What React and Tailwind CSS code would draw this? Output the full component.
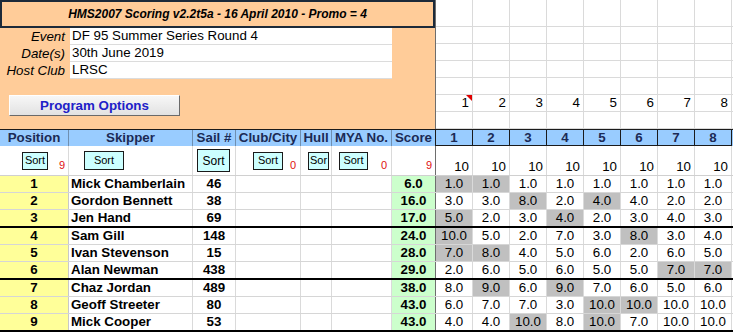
const font = "font-['Liberation_Sans',Arial,sans-serif]"

const rows = [
  { pos: 1, name: 'Mick Chamberlain', sail: 46, score: '6.0', r: ['1.0', '1.0', '1.0', '1.0', '1.0', '1.0', '1.0', '1.0'], g: [0, 1] },
  { pos: 2, name: 'Gordon Bennett', sail: 38, score: '16.0', r: ['3.0', '3.0', '8.0', '2.0', '4.0', '4.0', '2.0', '2.0'], g: [2, 4] },
  { pos: 3, name: 'Jen Hand', sail: 69, score: '17.0', r: ['5.0', '2.0', '3.0', '4.0', '2.0', '3.0', '4.0', '3.0'], g: [0, 3] },
  { pos: 4, name: 'Sam Gill', sail: 148, score: '24.0', r: ['10.0', '5.0', '2.0', '7.0', '3.0', '8.0', '3.0', '4.0'], g: [0, 5] },
  { pos: 5, name: 'Ivan Stevenson', sail: 15, score: '28.0', r: ['7.0', '8.0', '4.0', '5.0', '6.0', '2.0', '6.0', '5.0'], g: [0, 1] },
  { pos: 6, name: 'Alan Newman', sail: 438, score: '29.0', r: ['2.0', '6.0', '5.0', '6.0', '5.0', '5.0', '7.0', '7.0'], g: [6, 7] },
  { pos: 7, name: 'Chaz Jordan', sail: 489, score: '38.0', r: ['8.0', '9.0', '6.0', '9.0', '7.0', '6.0', '5.0', '6.0'], g: [1, 3] },
  { pos: 8, name: 'Geoff Streeter', sail: 80, score: '43.0', r: ['6.0', '7.0', '7.0', '3.0', '10.0', '10.0', '10.0', '10.0'], g: [4, 5] },
  { pos: 9, name: 'Mick Cooper', sail: 53, score: '43.0', r: ['4.0', '4.0', '10.0', '8.0', '10.0', '7.0', '10.0', '10.0'], g: [2, 4] },
]

const races = [1, 2, 3, 4, 5, 6, 7, 8]

function SortBtn({ label = 'Sort', className }) {
  return (
    <div className={`bg-[#ccffff] border border-[#1a1a1a] flex items-center justify-center text-[11px] leading-none ${className}`}>
      {label}
    </div>
  )
}

export default function App() {
  return (
    <div className={`${font} w-[733px] h-[335px] overflow-hidden bg-white text-black text-[13.33px]`}>
      {/* top area */}
      <div className="flex h-[129px]">
        <div className="w-[436px] shrink-0 bg-[#ffcc99] border-r border-[#6e6e6e] flex flex-col">
          <div className="h-[28px] border-2 border-[#1c2a3a] flex items-center justify-center font-bold italic text-[12px]">
            HMS2007 Scoring v2.2t5a - 16 April 2010 - Promo = 4
          </div>
          {[
            ['Event', 'DF 95 Summer Series Round 4'],
            ['Date(s)', '30th June 2019'],
            ['Host Club', 'LRSC'],
          ].map(([k, v]) => (
            <div key={k} className="flex h-[17px]">
              <div className="w-[70px] pr-[5px] text-right italic leading-[17px] whitespace-nowrap">{k}</div>
              <div className="w-[322px] bg-white border-b border-[#dcdcdc] pl-[2px] leading-[16px]">{v}</div>
            </div>
          ))}
          <div className="mt-[16px] ml-[9px] w-[171px] h-[21px] bg-gradient-to-b from-[#f7f7f7] to-[#e2e2e2] border border-t-white border-l-white border-r-[#6a6a6a] border-b-[#6a6a6a] flex items-center justify-center font-bold text-[#2020c8]">
            Program Options
          </div>
        </div>
        <div className="flex-1 flex flex-col">
          {[27, 17, 17, 17, 17, 17, 17].map((h, i) => (
            <div key={i} className={`flex border-b border-[#dadada] ${i === 0 ? 'h-[27px]' : 'h-[17px]'}`}>
              {races.map((n) => (
                <div key={n} className="relative w-[37px] shrink-0 border-r border-[#dadada] text-right pr-[3px] leading-[16px]">
                  {i === 5 ? n : ''}
                  {i === 5 && n === 1 && (
                    <span className="absolute top-0 right-0 w-0 h-0 border-t-[6px] border-t-[#e00000] border-l-[6px] border-l-transparent" />
                  )}
                </div>
              ))}
            </div>
          ))}
        </div>
      </div>

      {/* header row */}
      <div className="flex h-[17px] bg-[#99ccff] border-t border-[#1b1b1b] font-bold text-[#1b2a55] leading-[16px]">
        <div className="w-[69px] shrink-0 border-r border-[#6f8fb0] text-center">Position</div>
        <div className="w-[124px] shrink-0 border-r border-[#6f8fb0] text-center">Skipper</div>
        <div className="w-[43px] shrink-0 border-r border-[#6f8fb0] text-center whitespace-nowrap">Sail #</div>
        <div className="w-[65px] shrink-0 border-r border-[#6f8fb0] text-center">Club/City</div>
        <div className="w-[31px] shrink-0 border-r border-[#6f8fb0] text-center">Hull</div>
        <div className="w-[60px] shrink-0 border-r border-[#6f8fb0] text-center whitespace-nowrap">MYA No.</div>
        <div className="w-[44px] shrink-0 border-r border-[#1b1b1b] text-center">Score</div>
        {races.map((n) => (
          <div key={n} className="w-[37px] shrink-0 border-r border-b border-[#1b1b1b] text-center">{n}</div>
        ))}
      </div>

      {/* sort row */}
      <div className="flex h-[30px] border-b border-[#d0d0d0]">
        <div className="w-[69px] shrink-0 border-r border-[#dadada] flex items-center pl-[22px]">
          <SortBtn className="w-[26px] h-[18px]" />
          <span className="ml-auto self-end pr-[3px] pb-[2px] text-[11px] text-[#e01010]">9</span>
        </div>
        <div className="w-[124px] shrink-0 border-r border-[#dadada] flex items-center pl-[15px]">
          <SortBtn className="w-[40px] h-[19px]" />
        </div>
        <div className="w-[43px] shrink-0 border-r border-[#dadada] flex items-center pl-[4px]">
          <SortBtn className="w-[33px] h-[23px] text-[12px]" />
        </div>
        <div className="w-[65px] shrink-0 border-r border-[#dadada] flex items-center pl-[17px]">
          <SortBtn className="w-[30px] h-[18px]" />
          <span className="ml-auto self-end pr-[4px] pb-[2px] text-[11px] text-[#e01010]">0</span>
        </div>
        <div className="w-[31px] shrink-0 border-r border-[#dadada] flex items-center pl-[7px]">
          <SortBtn label="Sor" className="w-[21px] h-[18px] overflow-hidden" />
        </div>
        <div className="w-[60px] shrink-0 border-r border-[#dadada] flex items-center pl-[7px]">
          <SortBtn className="w-[29px] h-[18px]" />
          <span className="ml-auto self-end pr-[4px] pb-[2px] text-[11px] text-[#e01010]">0</span>
        </div>
        <div className="w-[44px] shrink-0 border-r border-[#6e6e6e] flex items-end justify-end pr-[3px] pb-[2px] text-[11px] text-[#e01010]">
          9
        </div>
        {races.map((n) => (
          <div key={n} className="w-[37px] shrink-0 border-r border-[#dadada] flex items-end justify-end pr-[3px] leading-[16px]">
            10
          </div>
        ))}
      </div>

      {/* results */}
      {rows.map((row, i) => {
        const last = i % 3 === 2
        return (
          <div
            key={row.pos}
            className={`flex leading-[16px] ${last ? 'h-[18px] border-b-2 border-black' : 'h-[17px] border-b border-[#d6d6d6]'}`}
          >
            <div className="w-[69px] shrink-0 bg-[#ffff99] border-r border-[#c8c8c8] text-center font-bold">{row.pos}</div>
            <div className="w-[124px] shrink-0 border-r border-[#dadada] pl-[2px] font-bold whitespace-nowrap">{row.name}</div>
            <div className="w-[43px] shrink-0 border-r border-[#dadada] text-center font-bold">{row.sail}</div>
            <div className="w-[65px] shrink-0 border-r border-[#dadada]" />
            <div className="w-[31px] shrink-0 border-r border-[#dadada]" />
            <div className="w-[60px] shrink-0 border-r border-[#dadada]" />
            <div className="w-[44px] shrink-0 bg-[#ccffcc] border-r border-[#6e6e6e] text-center font-bold">{row.score}</div>
            {row.r.map((v, j) => (
              <div
                key={j}
                className={`w-[37px] shrink-0 border-r border-[#dadada] text-center ${row.g.includes(j) ? 'bg-[#c0c0c0]' : ''}`}
              >
                {v}
              </div>
            ))}
          </div>
        )
      })}
    </div>
  )
}
